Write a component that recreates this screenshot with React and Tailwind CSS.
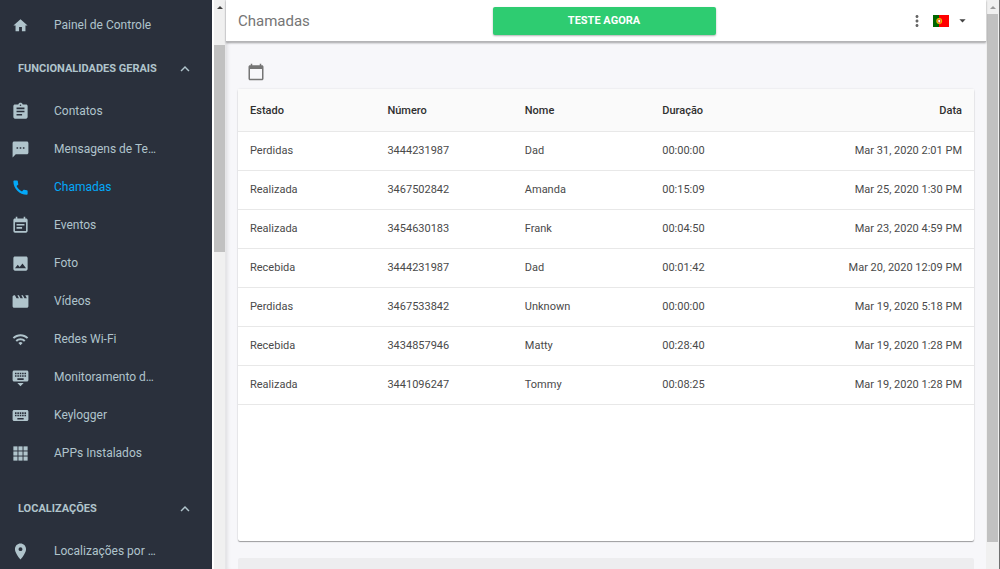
import React from "react";
import {
  MdHome,
  MdAssignment,
  MdTextsms,
  MdCall,
  MdEventNote,
  MdPhoto,
  MdMovie,
  MdWifi,
  MdKeyboardHide,
  MdKeyboard,
  MdPlace,
  MdMoreVert,
  MdExpandLess,
  MdArrowDropDown,
  MdCalendarToday,
} from "react-icons/md";

function GridIcon({ className }) {
  return (
    <svg viewBox="0 0 24 24" fill="currentColor" className={className} aria-hidden="true">
      {[3, 9.4, 15.8].map((y) =>
        [3, 9.4, 15.8].map((x) => <rect key={`${x}-${y}`} x={x} y={y} width="5.2" height="5.2" />)
      )}
    </svg>
  );
}

function PortugalFlag() {
  return (
    <svg viewBox="0 0 16 12" className="h-3 w-4" role="img" aria-label="Português">
      <rect width="16" height="12" fill="#f00" />
      <rect width="6" height="12" fill="#060" />
      <circle cx="6.2" cy="6" r="2.9" fill="#e8c400" />
      <path d="M4.6 4.4h3.2v2.2a1.6 1.6 0 0 1-3.2 0z" fill="#e33" />
      <path d="M5.3 4.9h1.8v1.7a.9.9 0 0 1-1.8 0z" fill="#fff" />
    </svg>
  );
}

const general = [
  { label: "Contatos", Icon: MdAssignment },
  { label: "Mensagens de Te…", Icon: MdTextsms },
  { label: "Chamadas", Icon: MdCall, active: true },
  { label: "Eventos", Icon: MdEventNote },
  { label: "Foto", Icon: MdPhoto },
  { label: "Vídeos", Icon: MdMovie },
  { label: "Redes Wi-Fi", Icon: MdWifi, small: true },
  { label: "Monitoramento d…", Icon: MdKeyboardHide },
  { label: "Keylogger", Icon: MdKeyboard },
  { label: "APPs Instalados", Icon: GridIcon },
];

const calls = [
  ["Perdidas", "3444231987", "Dad", "00:00:00", "Mar 31, 2020 2:01 PM"],
  ["Realizada", "3467502842", "Amanda", "00:15:09", "Mar 25, 2020 1:30 PM"],
  ["Realizada", "3454630183", "Frank", "00:04:50", "Mar 23, 2020 4:59 PM"],
  ["Recebida", "3444231987", "Dad", "00:01:42", "Mar 20, 2020 12:09 PM"],
  ["Perdidas", "3467533842", "Unknown", "00:00:00", "Mar 19, 2020 5:18 PM"],
  ["Recebida", "3434857946", "Matty", "00:28:40", "Mar 19, 2020 1:28 PM"],
  ["Realizada", "3441096247", "Tommy", "00:08:25", "Mar 19, 2020 1:28 PM"],
];

function NavItem({ label, Icon, active, small }) {
  return (
    <li>
      <a
        href="#"
        aria-current={active ? "page" : undefined}
        className={`flex h-[38px] items-center gap-6 pl-[11px] text-[12px] ${
          active ? "text-[#03a9f9]" : "text-[#b0c4cc]"
        }`}
      >
        <span className="flex w-[19px] shrink-0 justify-center">
          <Icon className={small ? "size-[17px]" : "size-[19px]"} />
        </span>
        {label}
      </a>
    </li>
  );
}

function SectionButton({ children }) {
  return (
    <button
      type="button"
      aria-expanded="true"
      className="flex h-[38px] w-full items-center justify-between px-[18px] text-[11px] font-bold text-[#b0c4cc]"
    >
      {children}
      <MdExpandLess className="size-[18px]" />
    </button>
  );
}

export default function App() {
  return (
    <div className="flex h-screen overflow-hidden bg-[#f7f7fa] font-['Roboto',sans-serif]">
      <nav className="w-[212px] shrink-0 overflow-hidden bg-[#2a303c] pt-1.5">
        <ul>
          <NavItem label="Painel de Controle" Icon={MdHome} small />
        </ul>
        <div className="pt-1.5">
          <SectionButton>FUNCIONALIDADES GERAIS</SectionButton>
          <ul className="pt-1">
            {general.map((item) => (
              <NavItem key={item.label} {...item} />
            ))}
          </ul>
        </div>
        <div className="pt-[18px]">
          <SectionButton>LOCALIZAÇÕES</SectionButton>
          <ul className="pt-1">
            <NavItem label="Localizações por …" Icon={MdPlace} />
          </ul>
        </div>
      </nav>

      <div
        className="flex w-[14px] shrink-0 flex-col border-l-2 border-r border-l-white border-r-[#e6e6e8] bg-[#f0f0f0]"
        aria-hidden="true"
      >
        <div className="flex h-[45px] justify-center pt-1.5">
          <svg viewBox="0 0 6 3" className="h-[3px] w-1.5">
            <path d="M0 3 3 0l3 3z" fill="#404040" />
          </svg>
        </div>
        <div className="h-[207px] bg-[#c1c1c1]" />
      </div>

      <div className="flex min-w-0 flex-1 flex-col">
        <header className="z-10 flex h-[42px] shrink-0 items-center border-b border-[#b4b4b6] bg-white pl-3 pr-4 shadow-[0_1px_2px_rgba(0,0,0,0.35)]">
          <h1 className="flex-1 pt-0.5 text-[15px] text-[#757575]">Chamadas</h1>
          <button
            type="button"
            className="h-7 w-[223px] rounded-xs bg-[#2ecc71] pt-0.5 text-[11px] font-bold text-white shadow-[0_1px_2px_rgba(0,0,0,0.3)]"
          >
            TESTE AGORA
          </button>
          <div className="flex flex-1 items-center justify-end text-[#424242]">
            <button type="button" aria-label="Mais opções" className="pr-[7px]">
              <MdMoreVert className="size-[18px] text-[#666]" />
            </button>
            <button type="button" aria-label="Idioma" className="flex items-center gap-1.5">
              <PortugalFlag />
              <MdArrowDropDown className="size-[15px]" />
            </button>
          </div>
        </header>

        <main className="flex min-h-0 flex-1 flex-col overflow-hidden px-3 shadow-[inset_4px_0_4px_-3px_rgba(0,0,0,0.12)]">
          <div className="flex h-[47px] shrink-0 items-center pl-[9px] pt-3">
            <button type="button" aria-label="Escolher data" className="text-[#757575]">
              <MdCalendarToday className="size-[18px]" />
            </button>
          </div>
          <section className="min-h-[452px] shrink-0 rounded-xs bg-white shadow-[0_1px_1px_rgba(0,0,0,0.35),0_0_2px_rgba(0,0,0,0.12)]">
            <table className="w-full table-fixed border-collapse text-left text-[11px] text-[#4a4a4a]">
              <colgroup>
                <col className="w-[18.67%]" />
                <col className="w-[18.67%]" />
                <col className="w-[18.67%]" />
                <col className="w-[18.67%]" />
                <col />
              </colgroup>
              <thead>
                <tr className="h-[42px] border-b border-[#e8e8e8] bg-[#fafafa] text-[#303030]">
                  <th className="px-3 pt-0.5 font-medium">Estado</th>
                  <th className="px-3 pt-0.5 font-medium">Número</th>
                  <th className="px-3 pt-0.5 font-medium">Nome</th>
                  <th className="px-3 pt-0.5 font-medium">Duração</th>
                  <th className="px-3 pt-0.5 text-right font-medium">Data</th>
                </tr>
              </thead>
              <tbody>
                {calls.map(([status, number, name, duration, date]) => (
                  <tr key={date + number} className="h-[39px] border-b border-[#e8e8e8]">
                    <td className="px-3 pt-0.5">{status}</td>
                    <td className="px-3 pt-0.5">{number}</td>
                    <td className="px-3 pt-0.5">{name}</td>
                    <td className="px-3 pt-0.5">{duration}</td>
                    <td className="px-3 pt-0.5 text-right">{date}</td>
                  </tr>
                ))}
              </tbody>
            </table>
          </section>
          <footer className="mt-[17px] h-12 shrink-0 rounded-xs bg-[#ededef]" />
        </main>
      </div>

      <div
        className="flex w-[14px] shrink-0 flex-col border-r border-[#707070] bg-[#f0f0f0] px-px"
        aria-hidden="true"
      >
        <div className="flex h-[14px] shrink-0 justify-center pt-1.5">
          <svg viewBox="0 0 6 3" className="h-[3px] w-1.5">
            <path d="M0 3 3 0l3 3z" fill="#9a9a9a" />
          </svg>
        </div>
        <div className="h-[528px] bg-[#c1c1c1]" />
      </div>
    </div>
  );
}
